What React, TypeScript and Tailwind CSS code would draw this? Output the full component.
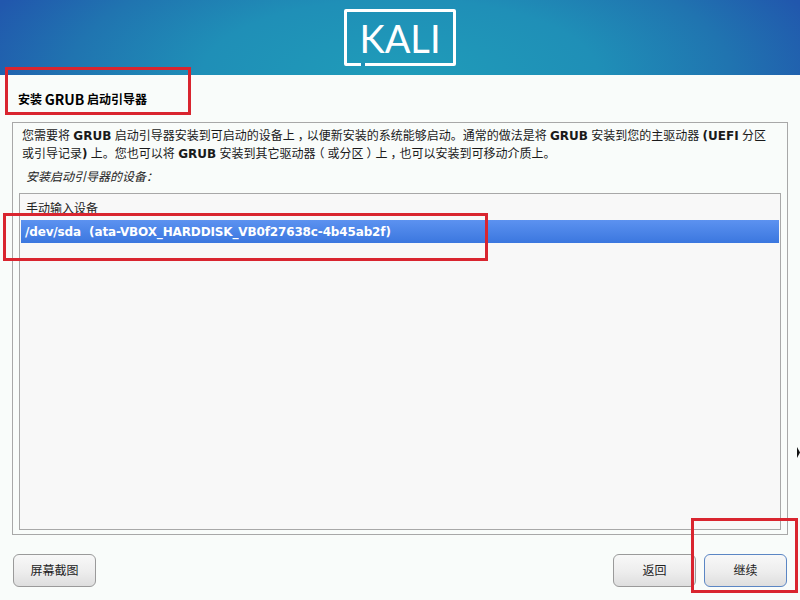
export default function App() {
  const cjk = { fontFamily: '"DejaVu Sans","Noto Sans CJK SC",sans-serif' };
  const btnBase =
    "h-[33px] w-[83px] rounded-[6px] bg-[linear-gradient(180deg,#f8f8f8,#ededed_55%,#dedede)] text-[12px] text-[#222] flex items-center justify-center";
  const punct = "inline-block w-[12px] text-center [font-feature-settings:'halt']";
  return (
    <div
      className="relative w-[800px] h-[600px] overflow-hidden bg-[#f9fcfa] flex flex-col text-[#1a1a1a]"
      style={cjk}
    >
      <header className="h-[75px] shrink-0 flex items-center justify-center bg-[radial-gradient(ellipse_440px_170px_at_50%_100%,#1f9cb9_0%,#1f8fb7_45%,#2074b0_75%,#2157ad_100%)]">
        <div className="relative w-[112px] h-[57px] flex items-center justify-center rounded-[2px] border-[3px] border-white">
          <span className="text-white text-[38px] leading-none font-normal [font-family:Lato,sans-serif] mt-[1px]">
            KALI
          </span>
          <div className="absolute left-[14px] bottom-[-3px] w-[4px] h-[3px] bg-[#1f8fb7]" />
        </div>
      </header>

      <div className="h-[47px] shrink-0 flex items-center pl-[18px] text-[12px] font-bold text-black whitespace-pre [font-family:'Noto_Sans_CJK_SC',sans-serif]">
        安装 <span className="text-[14px] leading-none">GRUB</span> 启动引导器
      </div>

      <main className="mx-[12px] h-[413px] shrink-0 border border-[#a8a8a8] flex flex-col px-[6px] pb-[4px]">
        <p className="pl-[3px] pt-[4px] text-[12px] leading-[18px] text-[#1a1a1a] [word-spacing:-0.5px]">
          您需要将 <b>GRUB</b> 启动引导器安装到可启动的设备上<span className={punct}>，</span>以便新安装的系统能够启动。通常的做法是将 <b>GRUB</b> 安装到您的主驱动器 <b>(UEFI</b> 分区
          <br />
          或引导记录<b>)</b> 上。您也可以将 <b>GRUB</b> 安装到其它驱动器<span className={punct}>（</span>或分区<span className={punct}>）</span>上<span className={punct}>，</span>也可以安装到可移动介质上。
        </p>
        <p className="pl-[7px] mt-[5px] h-[18px] text-[12px] leading-[18px] italic text-[#222]">安装启动引导器的设备：</p>
        <div className="mt-[7px] flex-1 border border-[#a8a8a8] bg-[#f8f8f8] px-[1px] pt-[5px]">
          <div className="h-[21px] pl-[5px] text-[12px] leading-[21px] text-[#222]">手动输入设备</div>
          <div className="h-[23px] pl-[4px] text-[12px] leading-[25px] font-bold tracking-[-0.14px] whitespace-pre text-white bg-[linear-gradient(180deg,#5c92f0,#3b77df)]">
            /dev/sda  (ata-VBOX_HARDDISK_VB0f27638c-4b45ab2f)
          </div>
        </div>
      </main>

      <footer className="flex-1 flex items-start px-[13px] pt-[19px]">
        <button className={btnBase + " border border-[#9a9a9a]"}>屏幕截图</button>
        <div className="ml-auto flex gap-[8px]">
          <button className={btnBase + " border border-[#9a9a9a]"}>返回</button>
          <button className={btnBase + " border-[1.5px] border-[#5b86c4]"}>继续</button>
        </div>
      </footer>

      <div className="absolute left-[5px] top-[67px] w-[186px] h-[48px] border-[3px] border-[#d9252f]" />
      <div className="absolute left-[3px] top-[213px] w-[485px] h-[48px] border-[3px] border-[#d9252f]" />
      <div className="absolute left-[691px] top-[518px] w-[107px] h-[75px] border-[3px] border-[#d9252f]" />
      <svg className="absolute left-[797px] top-[447px]" width="3" height="11" viewBox="0 0 3 11">
        <polygon points="0,0 3,5.5 0,11" fill="#111" />
      </svg>
    </div>
  );
}
